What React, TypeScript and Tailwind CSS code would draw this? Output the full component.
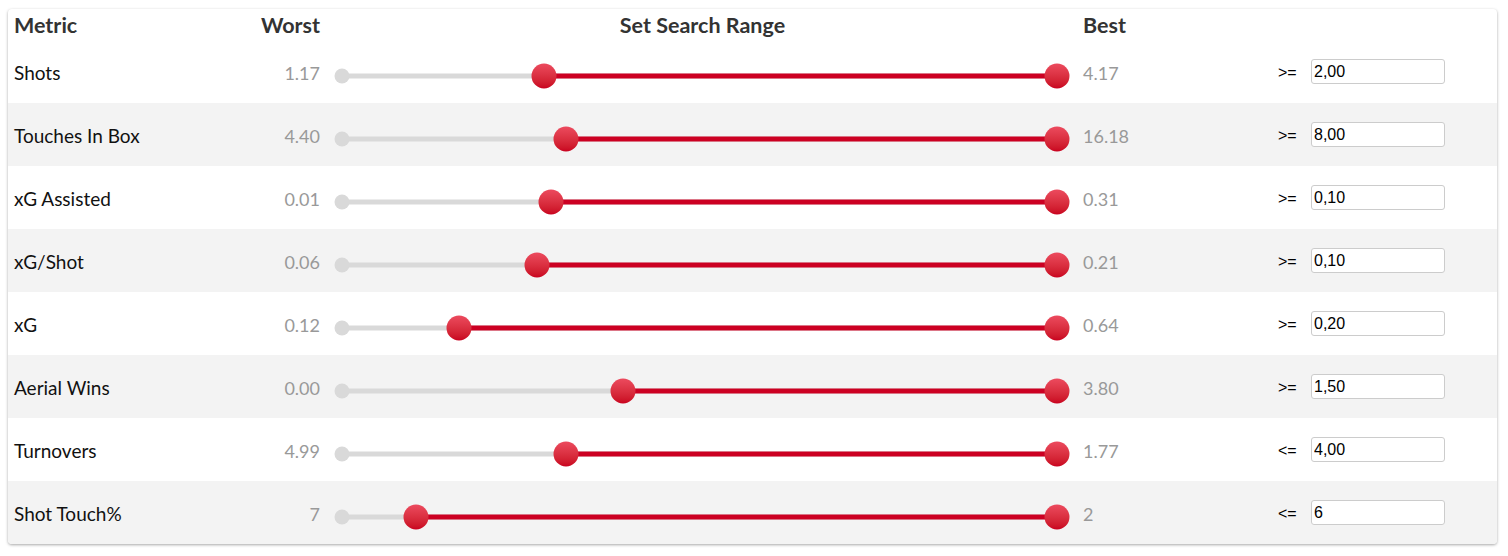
import React from "react";

// metric rows => pos is where the min thumb sits on the track (0..1)
type Row = { name: string; worst: string; best: string; op: string; value: string; pos: number };

const rows: Row[] = [
  { name: "Shots", worst: "1.17", best: "4.17", op: ">=", value: "2,00", pos: 0.2825 },
  { name: "Touches In Box", worst: "4.40", best: "16.18", op: ">=", value: "8,00", pos: 0.3133 },
  { name: "xG Assisted", worst: "0.01", best: "0.31", op: ">=", value: "0,10", pos: 0.2923 },
  { name: "xG/Shot", worst: "0.06", best: "0.21", op: ">=", value: "0,10", pos: 0.2727 },
  { name: "xG", worst: "0.12", best: "0.64", op: ">=", value: "0,20", pos: 0.1636 },
  { name: "Aerial Wins", worst: "0.00", best: "3.80", op: ">=", value: "1,50", pos: 0.393 },
  { name: "Turnovers", worst: "4.99", best: "1.77", op: "<=", value: "4,00", pos: 0.3133 },
  { name: "Shot Touch%", worst: "7", best: "2", op: "<=", value: "6", pos: 0.1035 },
];

const Thumb = ({ left }: { left: string }) => (
  <div
    className="absolute top-1/2 h-[25px] w-[25px] -translate-x-1/2 -translate-y-1/2 rounded-full bg-gradient-to-b from-[#ec4a5e] to-[#c9001f]"
    style={{ left }}
  />
);

const RangeSlider = ({ pos }: { pos: number }) => {
  const pct = `${pos * 100}%`;
  return (
    <div className="ml-[7px] mr-[13px] mt-[4px] relative h-[25px]">
      <div className="absolute left-0 right-0 top-1/2 h-[5px] -translate-y-1/2 rounded-full bg-[#d9d9d9]" />
      <div className="absolute left-0 top-1/2 h-[15px] w-[15px] -translate-x-1/2 -translate-y-1/2 rounded-full bg-[#d9d9d9]" />
      <div
        className="absolute right-0 top-1/2 h-[5px] -translate-y-1/2 bg-[#cc0022]"
        style={{ left: pct }}
      />
      <Thumb left={pct} />
      <Thumb left="100%" />
    </div>
  );
};

const App = () => {
  return (
    <div className="bg-white p-[8px] pt-[9px] font-['Lato',sans-serif]">
      <div className="w-[1489px] rounded-[4px] bg-white shadow-[0_1px_3px_rgba(0,0,0,0.35)] overflow-hidden">
        <div className="flex h-[31px] items-center pl-[6px] pt-[2px] text-[21.5px] font-bold text-[#333]">
          <div className="w-[246px]">Metric</div>
          <div className="w-[60px] text-right">Worst</div>
          <div className="ml-[15px] w-[735px] text-center">Set Search Range</div>
          <div className="ml-[13px] w-[195px]">Best</div>
        </div>
        {rows.map((r, i) => (
          <div
            key={r.name}
            className={`flex h-[63px] items-center pl-[6px] pt-[4px] text-[18px] ${i % 2 === 1 ? "bg-[#f3f3f3]" : "bg-white"}`}
          >
            <div className="w-[246px] text-[19px] text-[#111]">{r.name}</div>
            <div className="w-[60px] text-right text-[#999]">{r.worst}</div>
            <div className="ml-[15px] w-[735px]">
              <RangeSlider pos={r.pos} />
            </div>
            <div className="ml-[13px] w-[195px] text-[#999]">{r.best}</div>
            <div className="-mt-[2px] w-[33px] font-['Liberation_Sans',sans-serif] text-[16px] text-black">{r.op}</div>
            <input
              readOnly
              value={r.value}
              className="-mt-[4px] h-[25px] w-[134px] rounded-[3px] border border-[#ccc] bg-white px-[2px] font-['Liberation_Sans',sans-serif] text-[16px] text-black outline-none"
            />
          </div>
        ))}
      </div>
    </div>
  );
};

export default App;
